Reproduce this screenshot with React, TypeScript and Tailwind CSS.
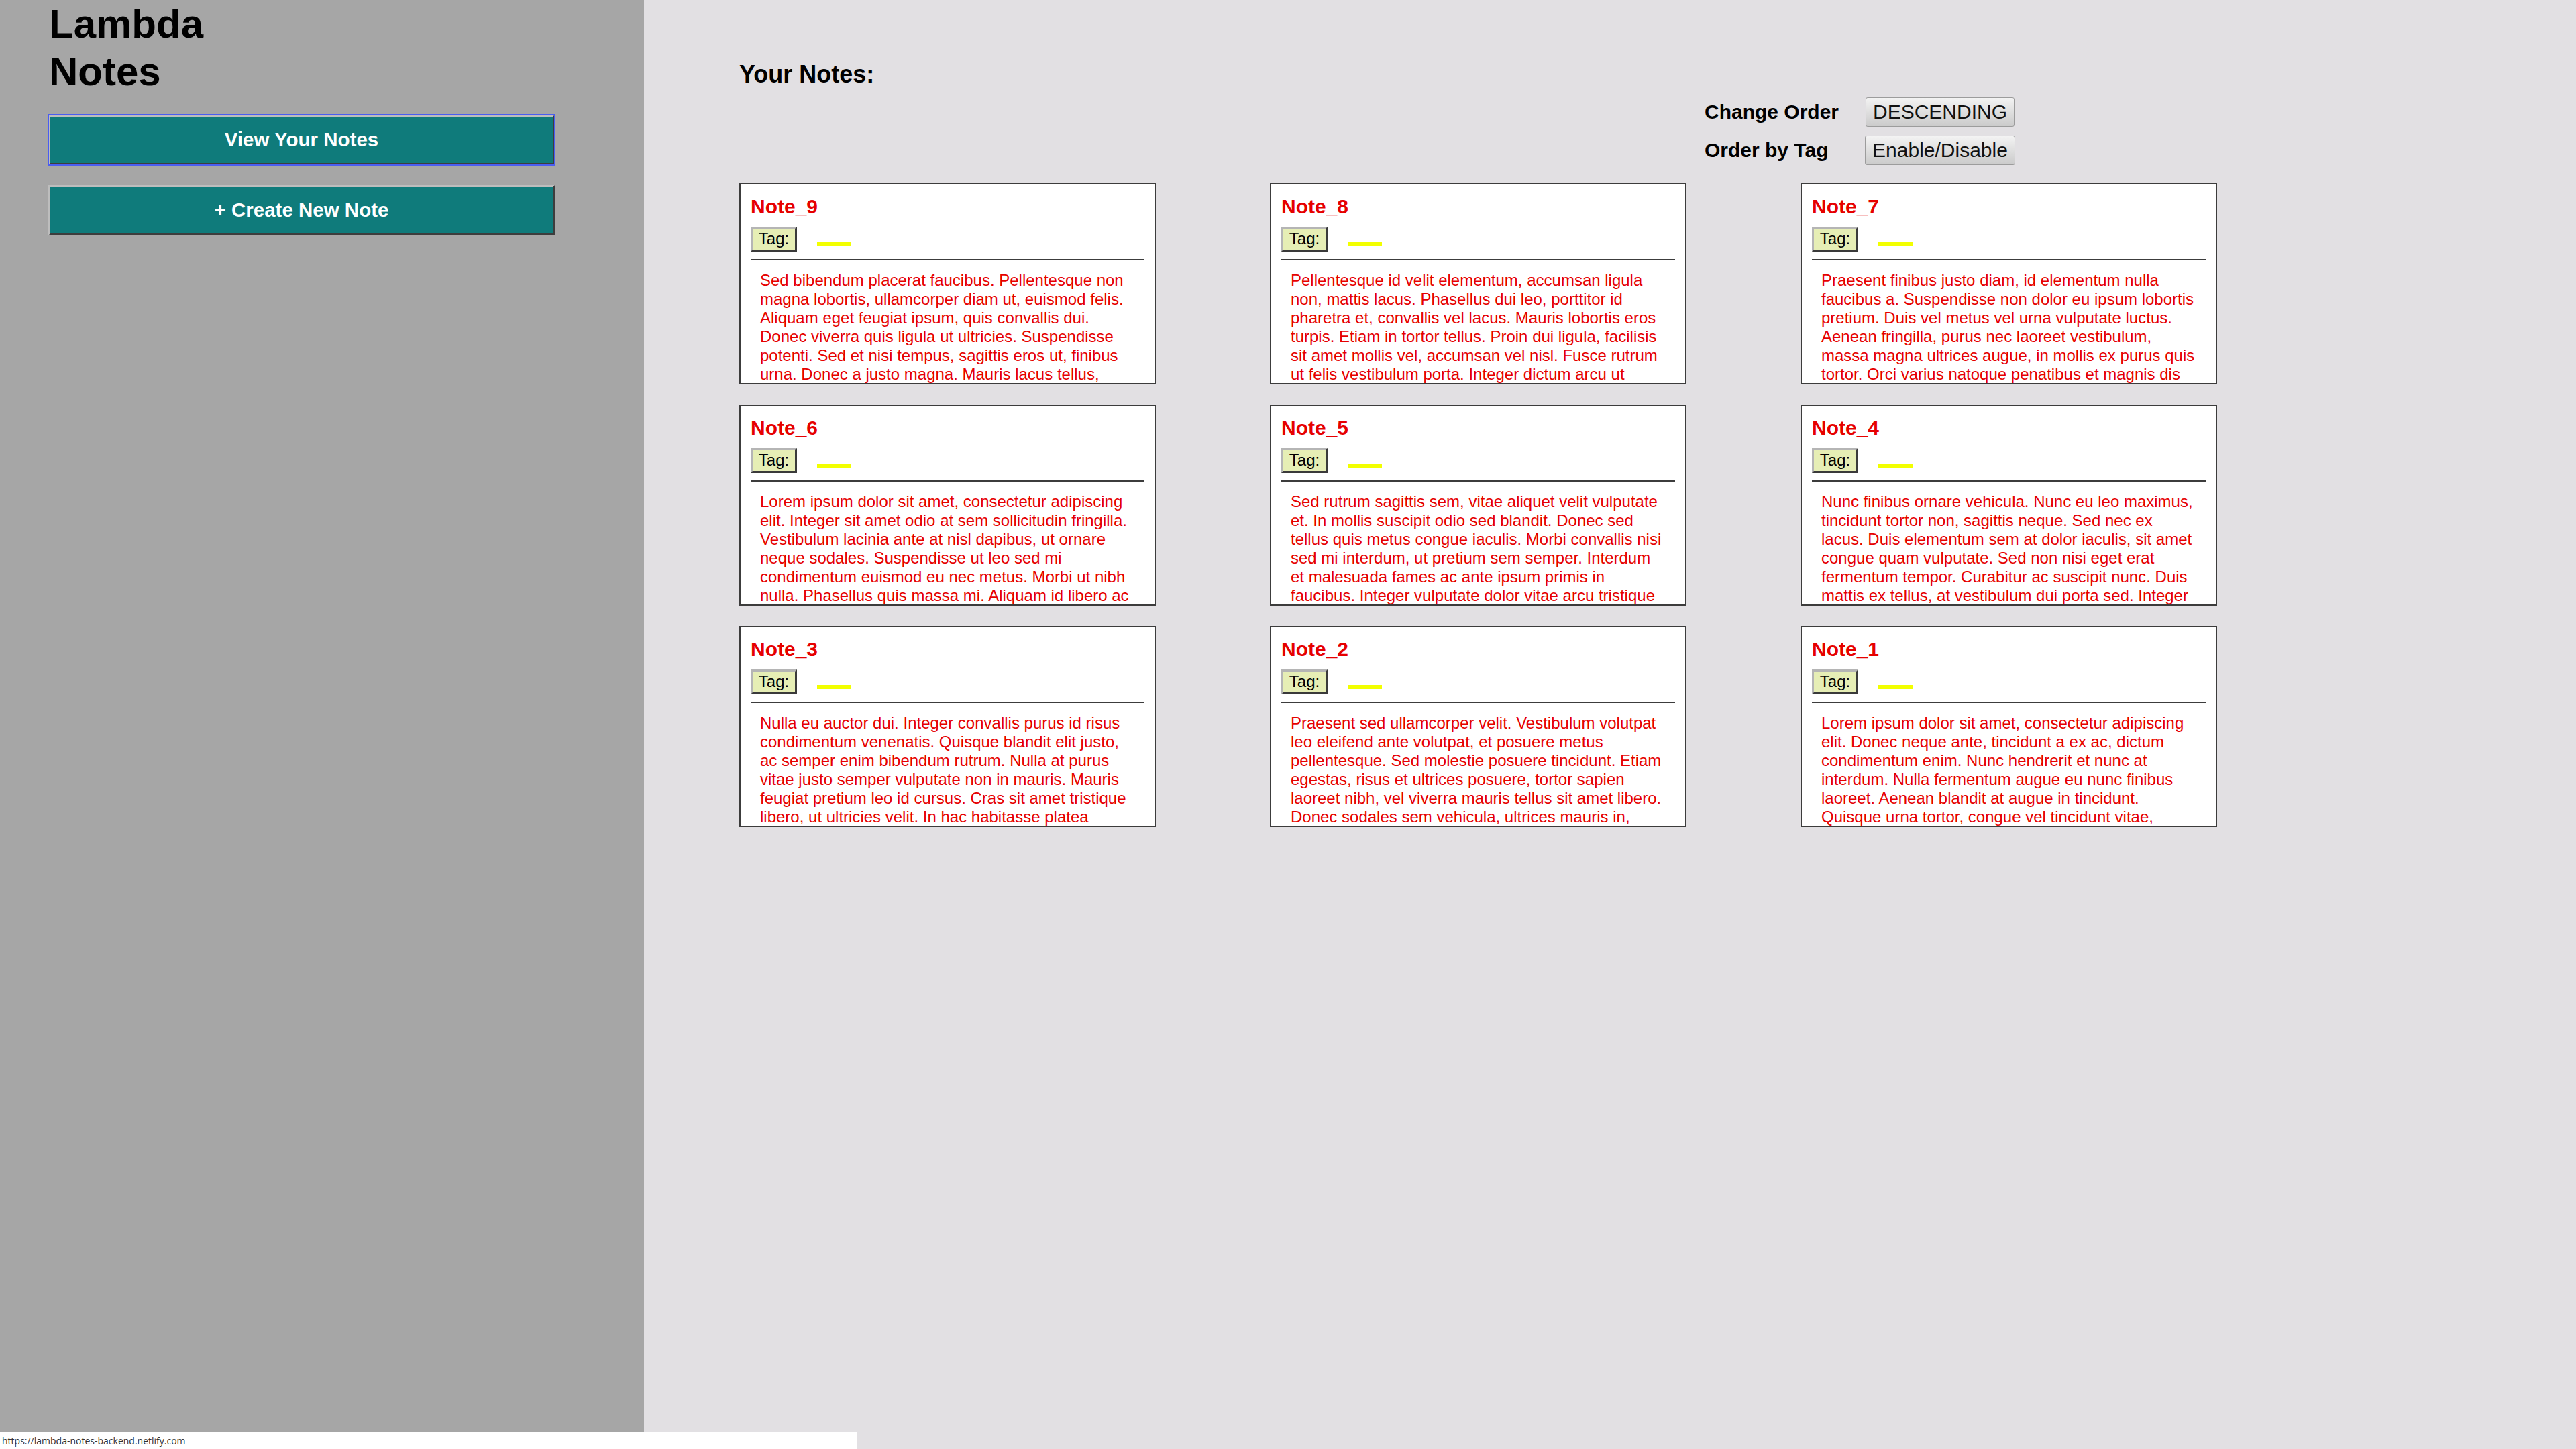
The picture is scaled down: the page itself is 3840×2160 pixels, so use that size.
import { useState } from "react";

const notes = [
  {
    id: 9,
    body: "Sed bibendum placerat faucibus. Pellentesque non magna lobortis, ullamcorper diam ut, euismod felis. Aliquam eget feugiat ipsum, quis convallis dui. Donec viverra quis ligula ut ultricies. Suspendisse potenti. Sed et nisi tempus, sagittis eros ut, finibus urna. Donec a justo magna. Mauris lacus tellus, pellentesque habitant morbi tristique senectus et netus.",
  },
  {
    id: 8,
    body: "Pellentesque id velit elementum, accumsan ligula non, mattis lacus. Phasellus dui leo, porttitor id pharetra et, convallis vel lacus. Mauris lobortis eros turpis. Etiam in tortor tellus. Proin dui ligula, facilisis sit amet mollis vel, accumsan vel nisl. Fusce rutrum ut felis vestibulum porta. Integer dictum arcu ut pellentesque habitant morbi tristique senectus.",
  },
  {
    id: 7,
    body: "Praesent finibus justo diam, id elementum nulla faucibus a. Suspendisse non dolor eu ipsum lobortis pretium. Duis vel metus vel urna vulputate luctus. Aenean fringilla, purus nec laoreet vestibulum, massa magna ultrices augue, in mollis ex purus quis tortor. Orci varius natoque penatibus et magnis dis parturient montes, nascetur ridiculus mus.",
  },
  {
    id: 6,
    body: "Lorem ipsum dolor sit amet, consectetur adipiscing elit. Integer sit amet odio at sem sollicitudin fringilla. Vestibulum lacinia ante at nisl dapibus, ut ornare neque sodales. Suspendisse ut leo sed mi condimentum euismod eu nec metus. Morbi ut nibh nulla. Phasellus quis massa mi. Aliquam id libero ac pellentesque habitant morbi tristique senectus.",
  },
  {
    id: 5,
    body: "Sed rutrum sagittis sem, vitae aliquet velit vulputate et. In mollis suscipit odio sed blandit. Donec sed tellus quis metus congue iaculis. Morbi convallis nisi sed mi interdum, ut pretium sem semper. Interdum et malesuada fames ac ante ipsum primis in faucibus. Integer vulputate dolor vitae arcu tristique pellentesque habitant morbi senectus.",
  },
  {
    id: 4,
    body: "Nunc finibus ornare vehicula. Nunc eu leo maximus, tincidunt tortor non, sagittis neque. Sed nec ex lacus. Duis elementum sem at dolor iaculis, sit amet congue quam vulputate. Sed non nisi eget erat fermentum tempor. Curabitur ac suscipit nunc. Duis mattis ex tellus, at vestibulum dui porta sed. Integer pellentesque habitant morbi tristique senectus.",
  },
  {
    id: 3,
    body: "Nulla eu auctor dui. Integer convallis purus id risus condimentum venenatis. Quisque blandit elit justo, ac semper enim bibendum rutrum. Nulla at purus vitae justo semper vulputate non in mauris. Mauris feugiat pretium leo id cursus. Cras sit amet tristique libero, ut ultricies velit. In hac habitasse platea dictumst. Pellentesque habitant morbi tristique.",
  },
  {
    id: 2,
    body: "Praesent sed ullamcorper velit. Vestibulum volutpat leo eleifend ante volutpat, et posuere metus pellentesque. Sed molestie posuere tincidunt. Etiam egestas, risus et ultrices posuere, tortor sapien laoreet nibh, vel viverra mauris tellus sit amet libero. Donec sodales sem vehicula, ultrices mauris in, pellentesque habitant morbi tristique senectus.",
  },
  {
    id: 1,
    body: "Lorem ipsum dolor sit amet, consectetur adipiscing elit. Donec neque ante, tincidunt a ex ac, dictum condimentum enim. Nunc hendrerit et nunc at interdum. Nulla fermentum augue eu nunc finibus laoreet. Aenean blandit at augue in tincidunt. Quisque urna tortor, congue vel tincidunt vitae, pellentesque habitant morbi tristique senectus et netus.",
  },
];

function NoteCard({ id, body }: { id: number; body: string }) {
  return (
    <div className="box-border flex h-[300px] flex-col overflow-hidden border-2 border-[#3c3c3c] bg-white px-[15px] pt-[16px]">
      <h3 className="text-[30px] font-bold leading-[34px] text-[#e60000]">Note_{id}</h3>
      <div className="mt-[12.5px] flex items-end">
        <button className="box-border flex h-[37px] w-[69px] items-center justify-center border-[3px] border-b-[#3a3a3a] border-l-[#b5b5b5] border-r-[#3a3a3a] border-t-[#b5b5b5] bg-[#e6eeb5] text-[24px] leading-[28px] text-black">
          Tag:
        </button>
        <span className="mb-[8px] ml-[30px] h-[6px] w-[51px] bg-[#f2ff00]" />
      </div>
      <div className="mt-[11.5px] h-[2px] shrink-0 bg-[#3c3c3c]" />
      {/* body is clipped by the card, like the original */}
      <p className="mt-[16px] px-[14px] text-[24px] leading-[28px] text-[#e60000]">{body}</p>
    </div>
  );
}

export default function App() {
  const [descending, setDescending] = useState(true);
  const [byTag, setByTag] = useState(false);

  const list = descending ? notes : [...notes].reverse();

  return (
    <div className="relative flex h-[2160px] overflow-hidden bg-[#e2e0e3] font-['Liberation_Sans',Arial,sans-serif] text-black">
      {/* sidebar */}
      <aside className="w-[960px] shrink-0 bg-[#a6a6a6] pl-[72px]">
        <h1 className="ml-[1px] text-[60px] font-bold leading-[71px]">
          Lambda
          <br />
          Notes
        </h1>
        <button className="mt-[29px] box-border flex h-[75px] w-[755px] items-center justify-center border-[3px] border-b-[#3d3d3d] border-l-[#bdbdbd] border-r-[#3d3d3d] border-t-[#bdbdbd] bg-[#0f7b7b] text-[29.5px] font-bold text-white outline-2 outline-offset-[-1px] outline-[#4a5df2]">
          View Your Notes
        </button>
        <button className="mt-[30px] box-border flex h-[75px] w-[755px] items-center justify-center border-[3px] border-b-[#3d3d3d] border-l-[#bdbdbd] border-r-[#3d3d3d] border-t-[#bdbdbd] bg-[#0f7b7b] text-[29.5px] font-bold text-white">
          + Create New Note
        </button>
      </aside>

      {/* main */}
      <main className="flex-1 pl-[142px] pt-[90px]">
        <h2 className="text-[36px] font-bold leading-[42px]">Your Notes:</h2>

        <div className="ml-[1439px] mt-[13.3px] grid grid-cols-[212px_226px] items-center gap-x-[26px] gap-y-[12.6px]">
          <span className="whitespace-nowrap text-[30px] font-bold leading-[34px]">Change Order</span>
          <button
            onClick={() => setDescending(!descending)}
            className="justify-self-center whitespace-nowrap rounded-[3px] border border-[#9c9c9c] bg-gradient-to-b from-[#f3f3f3] to-[#cbcbcb] px-[10px] py-[4px] text-[30px] leading-[34px] text-[#111]"
          >
            {descending ? "DESCENDING" : "ASCENDING"}
          </button>
          <span className="whitespace-nowrap text-[30px] font-bold leading-[34px]">Order by Tag</span>
          <button
            onClick={() => setByTag(!byTag)}
            className="justify-self-center whitespace-nowrap rounded-[3px] border border-[#9c9c9c] bg-gradient-to-b from-[#f3f3f3] to-[#cbcbcb] px-[10px] py-[4px] text-[30px] leading-[34px] text-[#111]"
          >
            Enable/Disable
          </button>
        </div>

        <div className="mt-[27.6px] grid grid-cols-[repeat(3,621px)] gap-x-[170px] gap-y-[30px]">
          {list.map((n) => (
            <NoteCard key={n.id} id={n.id} body={n.body} />
          ))}
        </div>
      </main>

      {/* status bubble */}
      <div className="absolute bottom-0 left-0 h-[26px] w-[1278px] border-r border-t border-[#9a9a9a] bg-white pl-[3px] font-['Open_Sans','Noto_Sans',sans-serif] text-[14px] leading-[25px] text-[#333]">
        https://lambda-notes-backend.netlify.com
      </div>
    </div>
  );
}
